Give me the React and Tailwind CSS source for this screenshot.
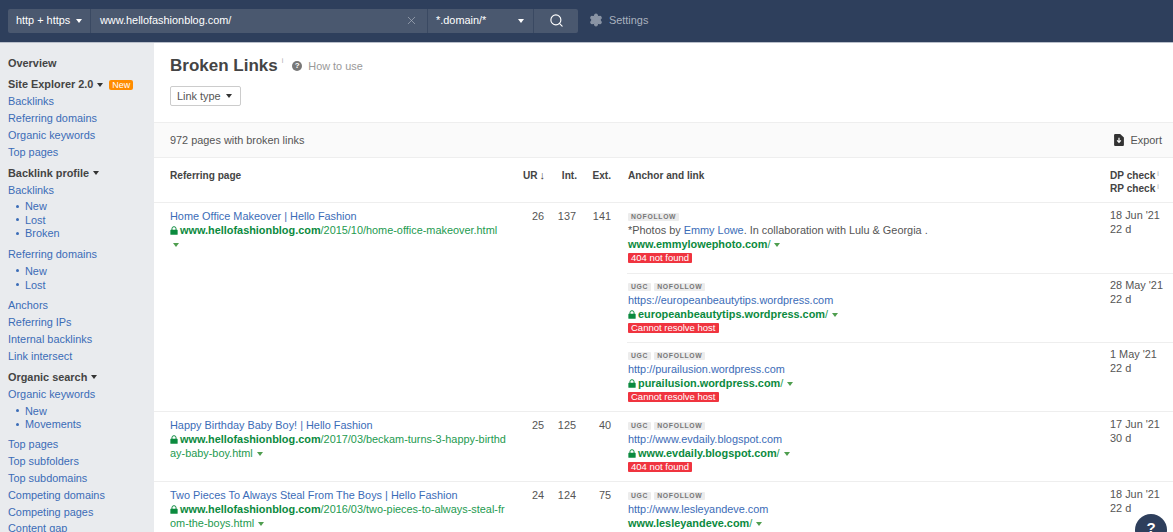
import React from 'react';
import { Search, Settings, X } from 'lucide-react';

const Caret = ({ className = 'border-t-[#333]' }) => (
  <span className={`inline-block w-0 h-0 border-x-[3.5px] border-x-transparent border-t-[4px] ${className}`}></span>
);

const Lock = () => (
  <svg className="inline-block w-[8px] h-[9px] mr-[2px] align-[-1px]" viewBox="0 0 9 10" fill="#0b8a3e">
    <path d="M1 4.2h7a.6.6 0 0 1 .6.6v4.3a.6.6 0 0 1-.6.6H1a.6.6 0 0 1-.6-.6V4.8A.6.6 0 0 1 1 4.2z" />
    <path d="M2.2 4.5V3a2.3 2.3 0 0 1 4.6 0v1.5" fill="none" stroke="#0b8a3e" strokeWidth="1.1" />
  </svg>
);

const Info = () => <sup className="text-[7px] text-[#aaa] font-normal ml-[2px] -top-[3px]">i</sup>;

const Link = ({ children, className = '' }) => <a className={`text-[#3b6cb7] ${className}`}>{children}</a>;

const Tag = ({ children }) => (
  <span className="inline-block h-[8px] leading-[8px] px-[3px] mr-[3px] bg-[#ececec] rounded-[1px] text-[6.8px] font-bold tracking-[0.7px] text-[#777]">
    {children}
  </span>
);

const Status = ({ children }) => (
  <span className="inline-block h-[10px] leading-[10px] px-[3px] bg-[#f0343f] rounded-[1px] text-[9.5px] text-white">{children}</span>
);

const SideHead = ({ children, caret, extra, className = '' }) => (
  <div className={`h-[17px] leading-[17px] font-bold text-[#444] flex items-center gap-[4px] ${className}`}>
    {children}
    {caret && <Caret />}
    {extra}
  </div>
);

const SideLink = ({ children }) => <div className="h-[16.9px] leading-[17px] text-[#3b6cb7]">{children}</div>;

const SubLinks = ({ items, className = 'mb-[6px]' }) => (
  <ul className={`mt-[1px] ${className}`}>
    {items.map((i) => (
      <li key={i} className="h-[13.6px] leading-[14px] pl-[8px] flex items-center text-[#3b6cb7]">
        <span className="w-[3px] h-[3px] rounded-full bg-[#3b6cb7] mr-[6px]"></span>
        {i}
      </li>
    ))}
  </ul>
);

const Sidebar = () => (
  <aside className="w-[154px] shrink-0 bg-[#e9ebee] pl-[8px] pt-[12px]">
    <SideHead>Overview</SideHead>
    <SideHead
      caret
      className="mt-[4px]"
      extra={<span className="ml-[2px] h-[10px] leading-[10px] px-[3px] bg-[#ff8c00] rounded-[2px] text-[9px] font-normal text-white">New</span>}
    >
      Site Explorer 2.0
    </SideHead>
    <SideLink>Backlinks</SideLink>
    <SideLink>Referring domains</SideLink>
    <SideLink>Organic keywords</SideLink>
    <SideLink>Top pages</SideLink>
    <SideHead caret className="mt-[4px]">Backlink profile</SideHead>
    <SideLink>Backlinks</SideLink>
    <SubLinks items={['New', 'Lost', 'Broken']} />
    <SideLink>Referring domains</SideLink>
    <SubLinks items={['New', 'Lost']} className="mb-[5.6px]" />
    <SideLink>Anchors</SideLink>
    <SideLink>Referring IPs</SideLink>
    <SideLink>Internal backlinks</SideLink>
    <SideLink>Link intersect</SideLink>
    <SideHead caret className="mt-[4.4px]">Organic search</SideHead>
    <SideLink>Organic keywords</SideLink>
    <SubLinks items={['New', 'Movements']} className="mb-[5px]" />
    <SideLink>Top pages</SideLink>
    <SideLink>Top subfolders</SideLink>
    <SideLink>Top subdomains</SideLink>
    <SideLink>Competing domains</SideLink>
    <SideLink>Competing pages</SideLink>
    <SideLink>Content gap</SideLink>
  </aside>
);

const Header = () => (
  <header className="h-[43px] shrink-0 bg-[#2e3f5c] border-b border-b-[#b9bfca] flex items-center pl-[8px] pb-[1px]">
    <div className="h-[24px] w-[570px] flex rounded-[2px] bg-[#4a586f] text-white">
      <div className="w-[83px] flex items-center pl-[8px] gap-[6px] border-r border-r-[#3a4962]">
        http + https <Caret className="border-t-white" />
      </div>
      <div className="w-[337px] flex items-center justify-between pl-[9px] pr-[9px] border-r border-r-[#3a4962]">
        www.hellofashionblog.com/
        <X size={13} strokeWidth={1.3} className="text-[#a7afbc]" />
      </div>
      <div className="w-[106px] flex items-center justify-between pl-[8px] pr-[9px] border-r border-r-[#3a4962]">
        *.domain/* <Caret className="border-t-white" />
      </div>
      <div className="flex-1 flex items-center justify-center">
        <Search size={15} strokeWidth={1.8} />
      </div>
    </div>
    <div className="ml-[11px] flex items-center gap-[6px] text-[#aab2bf]">
      <Settings size={14} fill="#8a94a5" stroke="#8a94a5" />
      Settings
    </div>
  </header>
);

const PageCell = ({ title, domain, path, lowCaret }) => (
  <div className="w-[357px] shrink-0 pl-[16px] pr-[2px] break-all">
    <Link className="block break-normal">{title}</Link>
    <div className="text-[#1d9a4f]">
      <Lock />
      <b className="text-[#0b8a3e]">{domain}</b>
      {path}
      {!lowCaret && (
        <span className="ml-[4px] align-middle inline-flex"><Caret className="border-t-[#4f9e4f]" /></span>
      )}
    </div>
    {lowCaret && <div className="pl-[3px] -mt-[1px]"><Caret className="border-t-[#4f9e4f]" /></div>}
  </div>
);

const Nums = ({ ur, int, ext }) => (
  <div className="w-[100px] shrink-0 flex text-[#555] text-right">
    <span className="w-[33px]">{ur}</span>
    <span className="w-[32px]">{int}</span>
    <span className="w-[35px]">{ext}</span>
  </div>
);

const LinkRow = ({ tags, anchor, secure, domain, status, date, age, border }) => (
  <div className={`flex h-[69.5px] text-[#555] ${border ? 'pt-[6px] border-t border-t-[#eee]' : 'pt-[7px]'}`}>
    <div className="w-[483px] shrink-0 pl-[1px]">
      <div className="h-[14px] -mb-[1px] flex items-center">{tags.map((t) => <Tag key={t}>{t}</Tag>)}</div>
      <div>{anchor}</div>
      <div className="text-[#0b8a3e]">
        {secure && <Lock />}
        <b>{domain}</b>
        <span className="text-[#1d9a4f]">/</span>
        <span className="ml-[4px] align-middle inline-flex"><Caret className="border-t-[#4f9e4f]" /></span>
      </div>
      <div className="leading-[13px]"><Status>{status}</Status></div>
    </div>
    <div className="-mt-[2px]">
      <div>{date}</div>
      <div>{age}</div>
    </div>
  </div>
);

const Table = () => (
  <div className="leading-[14px]">
    <div className="h-[45px] flex font-bold text-[#444] border-b border-b-[#eee] pt-[11px] text-[10.1px]">
      <div className="w-[357px] pl-[16px]">Referring page</div>
      <div className="w-[100px] flex text-right">
        <span className="w-[34px] flex items-start justify-end gap-[2px]">
          UR <span className="text-[11px] leading-[13px]">↓</span>
        </span>
        <span className="w-[32px]">Int.</span>
        <span className="w-[34px]">Ext.</span>
      </div>
      <div className="w-[499px] pl-[17px]">Anchor and link</div>
      <div className="leading-[13px]">
        <div>DP check<Info /></div>
        <div>RP check<Info /></div>
      </div>
    </div>

    <div className="flex h-[209px] border-b border-b-[#eee] pt-[6px]">
      <PageCell
        title="Home Office Makeover | Hello Fashion"
        domain="www.hellofashionblog.com"
        path="/2015/10/home-office-makeover.html"
        lowCaret
      />
      <Nums ur="26" int="137" ext="141" />
      <div className="flex-1 pl-[16px] -mt-[6px]">
        <LinkRow
          tags={['NOFOLLOW']}
          anchor={<>*Photos by <Link>Emmy Lowe</Link>. In collaboration with Lulu &amp; Georgia .</>}
          domain="www.emmylowephoto.com"
          status="404 not found"
          date="18 Jun '21"
          age="22 d"
        />
        <LinkRow
          border
          tags={['UGC', 'NOFOLLOW']}
          anchor={<Link>https://europeanbeautytips.wordpress.com</Link>}
          secure
          domain="europeanbeautytips.wordpress.com"
          status="Cannot resolve host"
          date="28 May '21"
          age="22 d"
        />
        <LinkRow
          border
          tags={['UGC', 'NOFOLLOW']}
          anchor={<Link>http://purailusion.wordpress.com</Link>}
          secure
          domain="purailusion.wordpress.com"
          status="Cannot resolve host"
          date="1 May '21"
          age="22 d"
        />
      </div>
    </div>

    <div className="flex h-[70px] border-b border-b-[#eee] pt-[6px]">
      <PageCell
        title="Happy Birthday Baby Boy! | Hello Fashion"
        domain="www.hellofashionblog.com"
        path="/2017/03/beckam-turns-3-happy-birthday-baby-boy.html"
      />
      <Nums ur="25" int="125" ext="40" />
      <div className="flex-1 pl-[16px] -mt-[6px]">
        <LinkRow
          tags={['UGC', 'NOFOLLOW']}
          anchor={<Link>http://www.evdaily.blogspot.com</Link>}
          secure
          domain="www.evdaily.blogspot.com"
          status="404 not found"
          date="17 Jun '21"
          age="30 d"
        />
      </div>
    </div>

    <div className="flex pt-[6px]">
      <PageCell
        title="Two Pieces To Always Steal From The Boys | Hello Fashion"
        domain="www.hellofashionblog.com"
        path="/2016/03/two-pieces-to-always-steal-from-the-boys.html"
      />
      <Nums ur="24" int="124" ext="75" />
      <div className="flex-1 pl-[16px] -mt-[6px]">
        <LinkRow
          tags={['UGC', 'NOFOLLOW']}
          anchor={<Link>http://www.lesleyandeve.com</Link>}
          domain="www.lesleyandeve.com"
          status="404 not found"
          date="18 Jun '21"
          age="22 d"
        />
      </div>
    </div>
  </div>
);

export default function App() {
  return (
    <div className="relative w-[1173px] h-[532px] overflow-hidden flex flex-col bg-white font-['Liberation_Sans',Arial,sans-serif] text-[10.9px] text-[#555]">
      <Header />
      <div className="flex flex-1 min-h-0">
        <Sidebar />
        <main className="flex-1 min-w-0">
          <div className="h-[79px] pl-[16px] pt-[12px]">
            <div className="flex items-center h-[22px]">
              <h1 className="text-[17px] leading-[22px] font-bold text-[#444]">Broken Links</h1>
              <span className="text-[7px] text-[#aaa] self-start ml-[4px] mt-[1px]">i</span>
              <span className="ml-[9px] w-[10px] h-[10px] rounded-full bg-[#777] text-white text-[8px] leading-[10px] font-bold text-center">?</span>
              <span className="ml-[6px] text-[#999]">How to use</span>
            </div>
            <div className="mt-[9px] w-[71px] h-[20px] border border-[#ccc] rounded-[2px] flex items-center justify-between pl-[6px] pr-[8px] text-[#555]">
              Link type <Caret />
            </div>
          </div>
          <div className="h-[36px] bg-[#fafafa] border-y border-y-[#eee] flex items-center justify-between pl-[16px] pr-[11px]">
            <span>972 pages with broken links</span>
            <span className="flex items-center gap-[7px]">
              <svg className="w-[10px] h-[12px]" viewBox="0 0 9 11">
                <path d="M0 1a1 1 0 0 1 1-1h4.6L9 3.2V10a1 1 0 0 1-1 1H1a1 1 0 0 1-1-1z" fill="#333" />
                <path d="M4.5 3.5v3.8M2.8 5.8l1.7 1.8 1.7-1.8" fill="none" stroke="#fff" strokeWidth="1.1" />
              </svg>
              Export
            </span>
          </div>
          <Table />
        </main>
      </div>
      <div className="absolute left-[1135px] top-[514px] w-[32px] h-[32px] rounded-full bg-[#2e3f5c] text-white text-[15px] font-bold text-center leading-[28px]">?</div>
    </div>
  );
}
